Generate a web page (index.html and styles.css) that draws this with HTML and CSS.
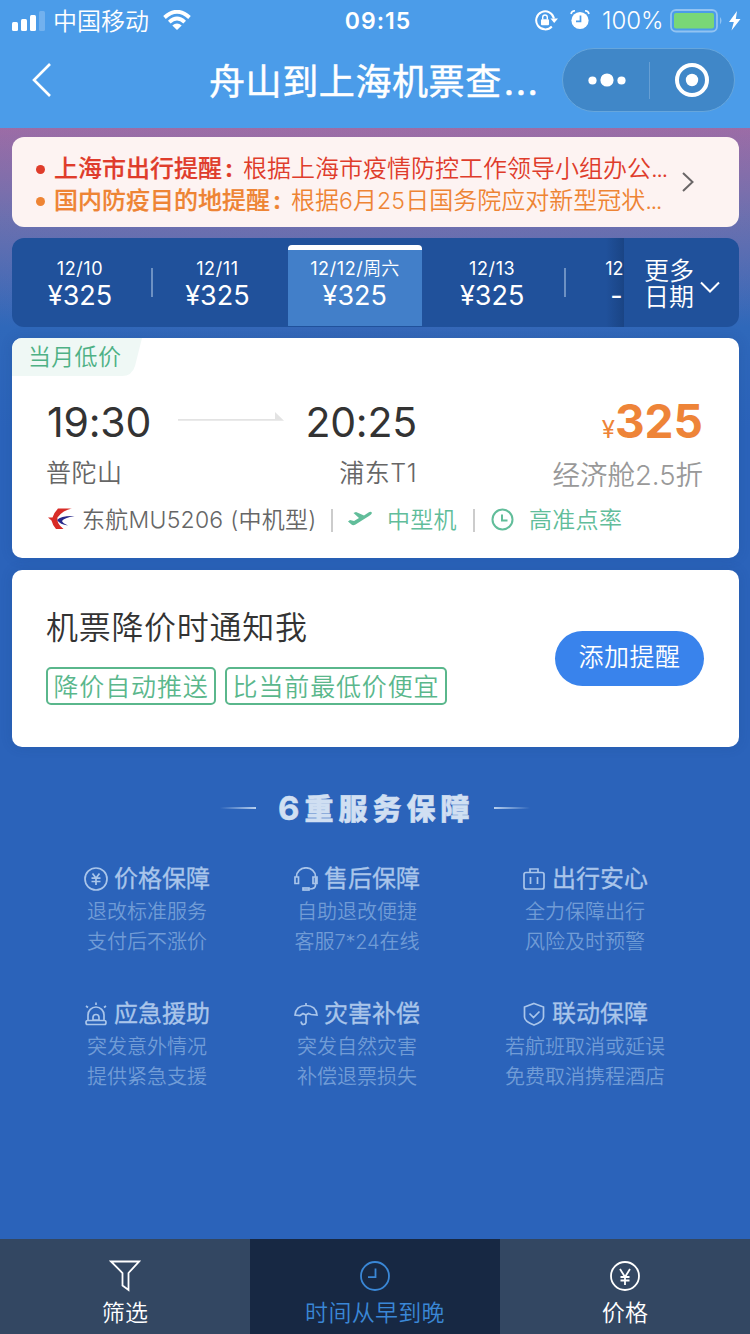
FILE: index.html
```html
<!DOCTYPE html>
<html lang="zh-CN">
<head>
<meta charset="utf-8">
<title>舟山到上海机票查询</title>
<link rel="stylesheet" href="styles.css">
</head>
<body>
<div class="app">
  <header class="top">
    <div class="status">
      <div class="status-left">
        <svg class="signal" width="34" height="20" viewBox="0 0 34 20"><g fill="#fff"><rect x="0" y="11" width="6" height="9" rx="1.5"/><rect x="9" y="8" width="6" height="12" rx="1.5"/><rect x="18" y="4" width="6" height="16" rx="1.5"/><rect x="27" y="0" width="6" height="20" rx="1.5" opacity=".22"/></g></svg>
        <span class="carrier">中国移动</span>
        <svg class="wifi" width="28" height="20" viewBox="0 0 28 20"><path d="M1.500 7.500Q14-4 26.500 7.500M6.300 12.200Q14 5 21.700 12.200" fill="none" stroke="#fff" stroke-width="3.800"/><path d="M9.300 15.500Q14 11.500 18.700 15.500L14 20Z" fill="#fff"/></svg>
      </div>
      <span class="clock">09:15</span>
      <div class="status-right">
        <svg width="24" height="21" viewBox="0 0 24 21"><path d="M16.800 16.500A9 9 0 1 1 19 8.500" fill="none" stroke="#fff" stroke-width="2"/><path d="M15.500 8.500h7.500l-3.800 4.500z" fill="#fff"/><rect x="6" y="9.300" width="8" height="6" rx="1" fill="#fff"/><path d="M7.700 9.500V7.300a2.300 2.300 0 0 1 4.600 0v2.200" fill="none" stroke="#fff" stroke-width="1.400"/></svg>
        <svg class="alarm" width="20" height="20" viewBox="0 0 20 20"><circle cx="10" cy="10.500" r="8.600" fill="#fff"/><path d="M1 4Q1.500 1 5 .8M19 4Q18.500 1 15 .8" fill="none" stroke="#fff" stroke-width="1.600"/><path d="M10.500 5.500v5.800H6" fill="none" stroke="#4b9ce9" stroke-width="1.700"/></svg>
        <span class="percent">100%</span>
        <svg class="battery" width="53" height="24" viewBox="0 0 53 24"><rect x="1" y="1" width="46" height="21.500" rx="5" fill="none" stroke="#92c3f2" stroke-width="1.800"/><rect x="4" y="4" width="40" height="15.500" rx="2" fill="#79d777"/><path d="M50 8q3 3.700 0 7.500z" fill="#92c3f2"/></svg>
        <svg class="bolt" width="12" height="20" viewBox="0 0 12 20"><path d="M8 0L0 11h4.800L2.500 19.500 11.500 8H6.800z" fill="#fff"/></svg>
      </div>
    </div>
    <div class="nav">
      <svg class="back" width="20" height="36" viewBox="0 0 20 36"><path d="M18 2L2 18l16 16" fill="none" stroke="#fff" stroke-width="2.600"/></svg>
      <h1 class="title">舟山到上海机票查<span class="dots">...</span></h1>
      <div class="capsule">
        <svg width="38" height="14" viewBox="0 0 38 14"><g fill="#fff"><circle cx="4.500" cy="7.500" r="4.100"/><circle cx="19" cy="7" r="6.600"/><circle cx="33.500" cy="7.500" r="4.100"/></g></svg>
        <i class="capsule-line"></i>
        <svg width="36" height="36" viewBox="0 0 36 36"><circle cx="18" cy="18" r="15" fill="none" stroke="#fff" stroke-width="4"/><circle cx="18" cy="18" r="6.200" fill="#fff"/></svg>
      </div>
    </div>
  </header>

  <main class="content">
    <section class="notice">
      <div class="notice-lines">
        <p class="notice-line red"><i class="dot"></i><b class="n-title">上海市出行提醒<span class="colon">:</span></b><span>根据上海市疫情防控工作领导小组办公<span class="tight">...</span></span></p>
        <p class="notice-line orange"><i class="dot"></i><b class="n-title">国内防疫目的地提醒<span class="colon">:</span></b><span>根据<span class="num">6</span>月<span class="num">25</span>日国务院应对新型冠状<span class="tight">...</span></span></p>
      </div>
      <svg width="12" height="20" viewBox="0 0 12 20"><path d="M1 1l9.500 9L1 19" fill="none" stroke="#6a6667" stroke-width="2"/></svg>
    </section>

    <section class="dates">
      <div class="date-list">
        <div class="date"><span class="day">12/10</span><span class="fare">¥325</span></div>
        <div class="date ruled"><span class="day">12/11</span><span class="fare">¥325</span></div>
        <div class="date active"><span class="day">12/12/<span class="week">周六</span></span><span class="fare">¥325</span></div>
        <div class="date"><span class="day">12/13</span><span class="fare">¥325</span></div>
        <div class="date ruled next"><span class="day">12</span><span class="fare">-</span></div>
      </div>
      <div class="more"><div class="more-text"><div>更多</div><div>日期</div></div><svg width="20" height="13" viewBox="0 0 20 13"><path d="M1 1.500l9 9 9-9" fill="none" stroke="#fff" stroke-width="2"/></svg></div>
    </section>

    <section class="card flight">
      <div class="badge"><svg class="badge-bg" width="130" height="38" viewBox="0 0 130 38"><path d="M0 0H130L123 28Q120 38 110 38H0Z" fill="#eff8f5"/></svg><span class="badge-text">当月低价</span></div>
      <div class="trip">
        <div class="stop"><span class="time">19:30</span><span class="airport">普陀山</span></div>
        <svg class="arrow" width="106" height="10" viewBox="0 0 106 10"><path d="M0 7h97V0l9 8.800H0z" fill="#e3e3e3"/></svg>
        <div class="stop arrive"><span class="time">20:25</span><span class="airport">浦东T1</span></div>
        <div class="cost"><span class="price"><span class="yen">¥</span>325</span><span class="cabin">经济舱2.5折</span></div>
      </div>
      <div class="info">
        <svg width="27" height="22" viewBox="0 0 27 22"><path d="M10 .5H24Q15 2 9.500 9.500 8 15 15.500 21H8Q4.500 17 3.500 12.500L0 9.500H4.500Q6.500 4 10 .5Z" fill="#d82c27"/><path d="M26.500 8Q13 7.500 9 12 12 16.500 20 17.500 14.500 15 14 13 16 9.800 26.500 8Z" fill="#28298b"/></svg>
        <span class="plane-no">东航MU5206 (中机型)</span><i class="bar"></i>
        <svg width="24" height="16" viewBox="0 0 24 16"><path d="M0 10.500L2 9l4 1 5-3L5.500 2 8 1l8 3.500 4.500-3q2.500-1.500 3.500.5-.5 1.500-3 3L7.500 13.500Q5 15 3.500 13.500Z" fill="#61bd9a"/></svg>
        <span class="feature medium">中型机</span><i class="bar"></i>
        <svg width="24" height="24" viewBox="0 0 24 24"><circle cx="12.500" cy="12.500" r="10" fill="none" stroke="#61bd9a" stroke-width="2"/><path d="M12 7.500v6h5.500" fill="none" stroke="#61bd9a" stroke-width="2"/></svg>
        <span class="feature punctual">高准点率</span>
      </div>
    </section>

    <section class="card remind">
      <div class="remind-main">
        <h2 class="remind-title">机票降价时通知我</h2>
        <div class="tags"><span class="tag">降价自动推送</span><span class="tag">比当前最低价便宜</span></div>
      </div>
      <button class="add">添加提醒</button>
    </section>

    <section class="services">
      <div class="heading"><i class="ray"></i><h2 class="heading-text"><span class="six">6</span>重服务保障</h2><i class="ray right"></i></div>
      <div class="service-grid">
        <div class="service"><h3 class="service-name"><svg width="24" height="24" viewBox="0 0 24 24"><circle cx="12" cy="12" r="11"/><path d="M8.500 6.500l3.500 4.500 3.500-4.500M12 11V18M7.500 11.200h9M7.500 14.500h9"/></svg>价格保障</h3><p>退改标准服务<br>支付后不涨价</p></div>
        <div class="service"><h3 class="service-name"><svg width="24" height="24" viewBox="0 0 24 24"><path d="M2.500 10V9.500a9.500 8.700 0 0 1 19 0V18q0 4-6 4M1 10h3.500v6.500H1zM19 10h4v6.500h-4z"/><rect x="9" y="21" width="6" height="2"/></svg>售后保障</h3><p>自助退改便捷<br>客服<span class="hours">7*24</span>在线</p></div>
        <div class="service"><h3 class="service-name"><svg width="24" height="24" viewBox="0 0 24 24"><rect x="2" y="5.500" width="20" height="16.500" rx="2"/><path d="M8 5V2h8v3M8.500 10v7M15.500 10v7"/></svg>出行安心</h3><p>全力保障出行<br>风险及时预警</p></div>
        <div class="service"><h3 class="service-name"><svg width="24" height="24" viewBox="0 0 24 24"><path d="M4 18.500V13a8 8 0 0 1 16 0v5.500M3.500 18.500h17q1.500 0 1.500 2t-1.500 2h-17q-1.500 0-1.500-2t1.500-2zM9 18v-2.500a3 3 0 0 1 6 0V18zM12 .5v2.500M2 4l2 1.500M22 4l-2 1.500"/></svg>应急援助</h3><p>突发意外情况<br>提供紧急支援</p></div>
        <div class="service"><h3 class="service-name"><svg width="24" height="24" viewBox="0 0 24 24"><path d="M12 1v2.500M1 13Q2 3.500 12 3.500T23 13L17 12.500 14.500 11.500 12 13 9 11.500 6 13.500zM12 13v7.500q-.5 2-2.500 2t-2.500-3"/></svg>灾害补偿</h3><p>突发自然灾害<br>补偿退票损失</p></div>
        <div class="service"><h3 class="service-name"><svg width="24" height="24" viewBox="0 0 24 24"><path d="M12 1.500L21.500 5v10q0 4.500-9.500 8-9.500-3.500-9.500-8V5zM7.500 11.500l4 4 6-6"/></svg>联动保障</h3><p>若航班取消或延误<br>免费取消携程酒店</p></div>
      </div>
    </section>
  </main>

  <footer class="tabs">
    <div class="tab"><svg width="32" height="32" viewBox="0 0 32 32"><path d="M2 1.500h28L19.500 13v17l-6-4.500V13z"/></svg><span>筛选</span></div>
    <div class="tab current"><svg width="32" height="32" viewBox="0 0 32 32"><circle cx="16" cy="16" r="14"/><path d="M16.500 8.500v8.700H9"/></svg><span>时间从早到晚</span></div>
    <div class="tab"><svg width="32" height="32" viewBox="0 0 32 32"><circle cx="16" cy="16" r="14"/><path d="M11 9l5 8 5-8M16 17v8M11.500 17h9M11.500 20.500h9"/></svg><span>价格</span></div>
  </footer>
</div>
</body>
</html>
```
FILE: styles.css
```css
* { box-sizing: border-box; margin: 0; padding: 0; }
body { width: 750px; height: 1334px; overflow: hidden; font-family: Inter, "Noto Sans CJK SC", sans-serif; color: #333; }
svg { display: block; flex: none; }
i { font-style: normal; flex: none; }
.app { display: flex; flex-direction: column; height: 1334px; background: #2b63ba; }

.top { height: 128px; background: #4b9ce9; color: #fff; flex: none; }
.status { height: 42px; display: grid; grid-template-columns: 300px 156px 294px; align-items: center; line-height: 42px; white-space: nowrap; }
.status-left { display: flex; align-items: center; padding-left: 12px; }
.carrier { font-size: 24px; font-weight: 350; margin-left: 7px; width: 97px; padding-top: 1px; line-height: 41px; }
.signal { margin-top: -1px; }
.wifi { margin: -2px 0 0 13px; }
.clock { text-align: center; font-size: 23px; font-weight: 600; letter-spacing: 1px; }
.status-right { display: flex; align-items: center; padding-left: 79px; }
.alarm { margin-left: 11px; }
.percent { font-size: 24px; font-weight: 350; margin-left: 12px; width: 63px; }
.battery { margin-left: 5px; margin-top: -1px; }
.bolt { margin-left: 6px; }
.status-right > svg:first-child, .alarm { margin-top: -2px; }
.nav { height: 76px; display: flex; align-items: center; padding-left: 32px; }
.title { font-size: 36px; font-weight: 400; -webkit-text-stroke: .5px #fff; line-height: 76px; padding-top: 2px; height: 76px; letter-spacing: .6px; white-space: nowrap; margin-left: 157px; width: 353px; }
.dots { letter-spacing: 1.500px; margin-left: 2px; }
.capsule { width: 173px; height: 64px; border-radius: 32px; background: #4087c8; border: 1px solid #66a6dc; display: flex; align-items: center; padding-left: 25px; }
.capsule-line { width: 1px; height: 37px; background: #669fd4; margin: 0 24px 0 23px; }

.content { flex: 1; padding: 9px 11px 0 12px; background: radial-gradient(ellipse 620px 240px at 50% 0, rgba(165,110,165,.35), transparent), linear-gradient(#9a6ca6 0, #6570b0 90px, #2f68ba 200px, #2b63ba 300px); }
.notice { height: 90px; border-radius: 12px; background: #fdf3f2; display: flex; align-items: center; padding: 0 45px 0 24px; }
.notice-lines { width: 646px; padding-top: 5px; }
.notice-line { display: flex; align-items: center; height: 32px; line-height: 32px; font-size: 24px; font-weight: 350; white-space: nowrap; }
.n-title { font-weight: 500; -webkit-text-stroke: .2px currentColor; }
.colon { display: inline-block; width: 21px; padding-left: 3px; font-weight: 700; }
.dot { width: 9px; height: 9px; border-radius: 50%; background: currentColor; margin: 2px 9px 0 0; }
.red { color: #df3c2b; }
.orange { color: #ee8434; }
.num { letter-spacing: .2px; font-size: 23px; }
.tight { letter-spacing: -1.500px; }

.dates { margin-top: 11px; height: 89px; border-radius: 12px; background: #20519b; display: flex; overflow: hidden; color: #fff; }
.date-list { width: 612px; padding-left: 1px; display: flex; background: linear-gradient(90deg, transparent 594px, rgba(20,55,110,.5)); }
.date { flex: none; width: 134px; margin-right: 3.400px; display: flex; flex-direction: column; align-items: center; padding-top: 19px; position: relative; }
.ruled::before { content: ""; position: absolute; left: 1px; top: 30px; width: 2px; height: 29px; background: #6d91c3; }
.active { background: #427fc9; margin-top: 7px; height: 81px; border-top: 5px solid #fff; border-radius: 4px 4px 0 0; padding-top: 7px; }
.day { font-size: 18px; line-height: 24px; letter-spacing: .6px; font-weight: 400; white-space: nowrap; }
.week { font-weight: 350; letter-spacing: 0; }
.fare { font-size: 27px; line-height: 30px; }
.next { width: 61px; margin: 0; align-items: flex-end; }
.next .day { letter-spacing: 0; }
.next .fare { padding-right: 1px; }
.more { flex: 1; display: flex; align-items: center; padding-left: 20px; }
.more-text { font-size: 25px; line-height: 26px; width: 56px; font-weight: 350; padding-top: 2px; }
.more svg { margin-top: 9px; }

.card { background: #fff; border-radius: 10px; box-shadow: 0 0 12px rgba(20,60,120,.18); }
.flight { margin-top: 11px; height: 220px; }
.badge { height: 38px; display: grid; width: 130px; overflow: hidden; border-top-left-radius: 10px; }
.badge-bg, .badge-text { grid-area: 1 / 1; }
.badge-text { padding-left: 16px; font-size: 23px; line-height: 38px; color: #4eb185; z-index: 1; letter-spacing: .3px; font-weight: 350; }
.trip { display: flex; padding: 22px 36px 0 35px; height: 128px; }
.stop { display: flex; flex-direction: column; width: 104px; white-space: nowrap; }
.time { font-size: 41px; line-height: 49px; letter-spacing: -.2px; }
.airport { font-size: 25px; line-height: 52px; font-weight: 350; color: #666; letter-spacing: .5px; margin-left: -1px; }
.arrow { margin: 14px 23px 0 27px; }
.arrive { width: 110px; align-items: flex-end; }
.cost { flex: 1; display: flex; flex-direction: column; align-items: flex-end; white-space: nowrap; }
.price { color: #ee8438; font-size: 46px; font-weight: 700; line-height: 47px; }
.yen { font-size: 24px; font-weight: 400; }
.cabin { color: #999; font-size: 27.500px; line-height: 40px; margin-top: 2px; font-weight: 350; }
.info { display: flex; align-items: center; height: 30px; padding-left: 36px; font-size: 23px; font-weight: 350; line-height: 30px; white-space: nowrap; color: #666; }
.info span { padding-top: 1px; }
.plane-no { margin-left: 7px; width: 234px; letter-spacing: .25px; }
.bar { width: 2px; height: 23px; background: #ccc; margin: 2px 15px 0 15px; }
.feature { color: #61bd9a; letter-spacing: .3px; }
.medium { margin-left: 15px; width: 71px; }
.punctual { margin-left: 15px; }

.remind { margin-top: 12px; height: 177px; display: flex; padding: 33px 35px 0 34px; }
.remind-main { flex: 1; }
.remind-title { font-size: 32px; font-weight: 350; line-height: 50px; height: 48px; letter-spacing: .7px; }
.tags { display: flex; gap: 9px; margin-top: 16px; }
.tag { height: 38px; border: 2px solid #5ab78c; border-radius: 5px; color: #5ab78c; font-size: 25px; letter-spacing: .85px; line-height: 36px; font-weight: 350; padding: 0 5.500px; white-space: nowrap; }
.add { width: 149px; height: 55px; margin-top: 28px; border: 0; border-radius: 28px; background: #3983ec; color: #fff; font: 350 25px/52px Inter, "Noto Sans CJK SC", sans-serif; letter-spacing: .5px; padding-bottom: 3px; }

.services { padding-top: 41px; }
.heading { height: 40px; display: flex; align-items: center; padding-left: 208px; }
.ray { width: 36px; height: 2px; background: linear-gradient(90deg, transparent, #b8d0ee); }
.right { background: linear-gradient(90deg, #b8d0ee, transparent); }
.heading-text { width: 238px; padding-left: 22px; font-size: 29px; font-weight: 900; line-height: 40px; padding-top: 2px; letter-spacing: 5px; color: #d0dff2; white-space: nowrap; -webkit-text-stroke: .5px #d0dff2; }
.six { font-size: 33px; font-weight: 700; }
.service-grid { display: grid; grid-template-columns: 210px 210px 246px; padding: 32px 0 0 30px; row-gap: 39px; text-align: center; }
.service { height: 96px; }
.service-name { display: flex; justify-content: center; align-items: center; gap: 6px; height: 36px; font-size: 24px; line-height: 36px; font-weight: 400; -webkit-text-stroke: .3px #a9c5ea; color: #a9c5ea; padding-top: 1px; }
.service-name svg { fill: none; stroke: #a9c5ea; stroke-width: 1.700; }
.service p { font-size: 20px; line-height: 30px; padding-top: 1px; font-weight: 350; color: #719cd6; white-space: nowrap; }
.hours { font-feature-settings: "calt" 0; letter-spacing: -.2px; }

.tabs { height: 95px; flex: none; display: grid; grid-template-columns: 1fr 1fr 1fr; }
.tab { background: #334762; color: #fff; display: flex; flex-direction: column; align-items: center; padding-top: 21px; font-size: 23px; line-height: 42px; font-weight: 350; letter-spacing: .3px; }
.tab svg { fill: none; stroke: currentColor; stroke-width: 1.800; }
.current { background: #172843; color: #3a87d6; }
```
